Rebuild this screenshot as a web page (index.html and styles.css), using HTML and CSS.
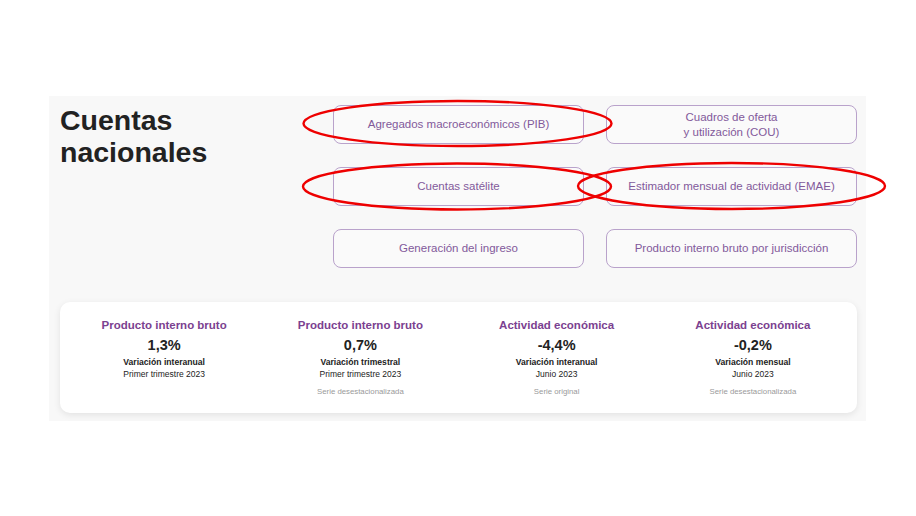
FILE: index.html
```html
<!DOCTYPE html>
<html lang="es">
<head>
<meta charset="utf-8">
<title>Cuentas nacionales</title>
<link rel="stylesheet" href="styles.css">
</head>
<body>
<section class="panel">
  <div class="top">
    <h1 class="title">Cuentas<br>nacionales</h1>
    <nav class="links">
      <a class="btn" href="#">Agregados macroeconómicos (PIB)</a>
      <a class="btn" href="#">Cuadros de oferta<br>y utilización (COU)</a>
      <a class="btn" href="#">Cuentas satélite</a>
      <a class="btn" href="#">Estimador mensual de actividad (EMAE)</a>
      <a class="btn" href="#">Generación del ingreso</a>
      <a class="btn" href="#">Producto interno bruto por jurisdicción</a>
    </nav>
  </div>
  <div class="card">
    <div class="stat">
      <div class="stat-title">Producto interno bruto</div>
      <div class="stat-value">1,3%</div>
      <div class="stat-kind">Variación interanual</div>
      <div class="stat-period">Primer trimestre 2023</div>
    </div>
    <div class="stat">
      <div class="stat-title">Producto interno bruto</div>
      <div class="stat-value">0,7%</div>
      <div class="stat-kind">Variación trimestral</div>
      <div class="stat-period">Primer trimestre 2023</div>
      <div class="stat-note">Serie desestacionalizada</div>
    </div>
    <div class="stat">
      <div class="stat-title">Actividad económica</div>
      <div class="stat-value">-4,4%</div>
      <div class="stat-kind">Variación interanual</div>
      <div class="stat-period">Junio 2023</div>
      <div class="stat-note">Serie original</div>
    </div>
    <div class="stat">
      <div class="stat-title">Actividad económica</div>
      <div class="stat-value">-0,2%</div>
      <div class="stat-kind">Variación mensual</div>
      <div class="stat-period">Junio 2023</div>
      <div class="stat-note">Serie desestacionalizada</div>
    </div>
  </div>
</section>
<svg class="marks" width="916" height="516" viewBox="0 0 916 516">
  <ellipse cx="457.5" cy="123.5" rx="154" ry="22.5"/>
  <ellipse cx="457" cy="186.5" rx="154" ry="23"/>
  <ellipse cx="731.5" cy="186" rx="153.5" ry="23"/>
</svg>
</body>
</html>
```

FILE: styles.css
```css
html, body {
  margin: 0;
  padding: 0;
  background: #ffffff;
}
body {
  font-family: "Liberation Sans", Arial, sans-serif;
  width: 916px;
  height: 516px;
  overflow: hidden;
}
.panel {
  margin: 96px 0 0 49px;
  width: 817px;
  box-sizing: border-box;
  padding: 8px 9px 8px 11px;
  background: #f8f8f8;
}
.top {
  display: flex;
  justify-content: space-between;
  align-items: flex-start;
}
.title {
  margin: 0;
  font-size: 28.5px;
  line-height: 32px;
  font-weight: 700;
  color: #222222;
}
.links {
  margin-top: 1px;
  display: grid;
  grid-template-columns: 251px 251px;
  grid-auto-rows: 39px;
  column-gap: 22px;
  row-gap: 23px;
}
.btn {
  display: flex;
  align-items: center;
  justify-content: center;
  text-align: center;
  box-sizing: border-box;
  border: 1px solid #b9a2cb;
  border-radius: 8px;
  background: #fafafa;
  color: #82599a;
  font-size: 11.5px;
  line-height: 15px;
  text-decoration: none;
}
.card {
  margin-top: 34px;
  height: 111px;
  box-sizing: border-box;
  padding: 16px 6px 0;
  background: #ffffff;
  border-radius: 10px;
  box-shadow: 0 2px 7px rgba(0, 0, 0, 0.09);
  display: grid;
  grid-template-columns: repeat(4, 1fr);
}
.stat {
  display: flex;
  flex-direction: column;
  align-items: center;
  text-align: center;
}
.stat-title {
  font-size: 11.5px;
  line-height: 14px;
  font-weight: 700;
  color: #7b4190;
}
.stat-value {
  margin-top: 5px;
  font-size: 14.5px;
  line-height: 17px;
  font-weight: 700;
  color: #222222;
}
.stat-kind {
  margin-top: 3px;
  font-size: 8.6px;
  line-height: 11px;
  font-weight: 700;
  color: #222222;
}
.stat-period {
  margin-top: 1px;
  font-size: 8.5px;
  line-height: 11px;
  color: #222222;
}
.stat-note {
  margin-top: 7px;
  font-size: 7.8px;
  line-height: 10px;
  color: #9a9a9a;
}
.marks {
  position: absolute;
  left: 0;
  top: 0;
  pointer-events: none;
}
.marks ellipse {
  fill: none;
  stroke: #ee0000;
  stroke-width: 2.4;
}
```
